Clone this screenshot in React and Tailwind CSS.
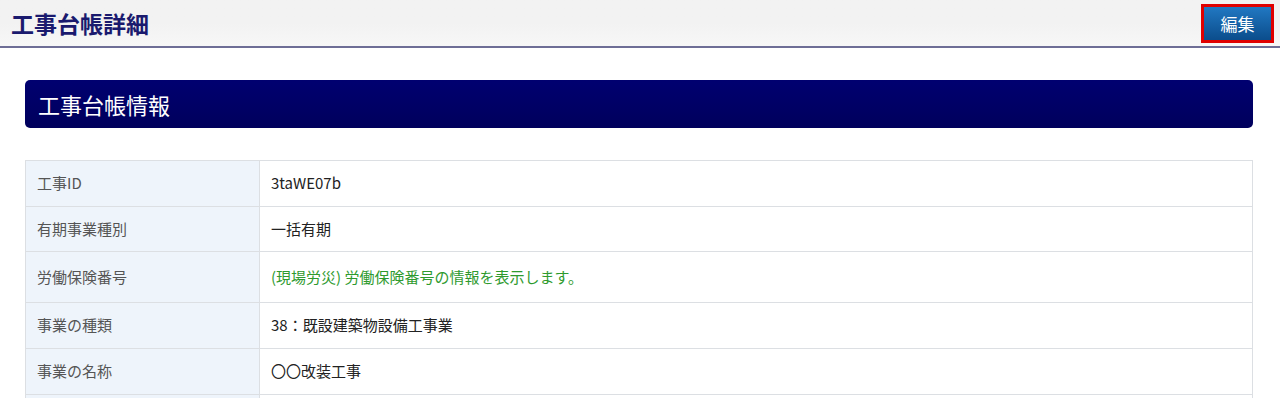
export default function App() {
    const rows = [
        { label: "工事ID", value: "3taWE07b", h: "h-[46px]" },
        { label: "有期事業種別", value: "一括有期", h: "h-[45px]" },
        { label: "労働保険番号", value: "(現場労災) 労働保険番号の情報を表示します。", h: "h-[51px]", green: true },
        { label: "事業の種類", value: "38：既設建築物設備工事業", h: "h-[46px]" },
        { label: "事業の名称", value: "〇〇改装工事", h: "h-[46px]" },
        { label: "", value: "", h: "h-[46px]" },
    ];

    return (
        <div className="w-[1280px] h-[398px] overflow-hidden bg-white font-['Noto_Sans_CJK_JP','Noto_Sans',sans-serif]">
            <div className="h-[48px] bg-gradient-to-b from-[#f2f2f2] via-[#f2f2f2] to-[#f7f7f7] border-b-2 border-[#6e6e96] flex items-center justify-between pl-[11px] pr-[6px]">
                <h1 className="text-[23px] font-bold text-[#1a1a6e] leading-none">工事台帳詳細</h1>
                <div className="border-[3px] border-[#e00000]">
                    <button className="w-[67px] h-[33px] bg-gradient-to-b from-[#2178c2] to-[#0b4d8c] text-white text-[17px] leading-none">
                        編集
                    </button>
                </div>
            </div>

            <div className="pl-[25px] pr-[27px] pt-[32px]">
                <div className="h-[48px] rounded-[5px] bg-gradient-to-b from-[#000070] to-[#00005c] flex items-center px-[13px]">
                    <h2 className="text-[22px] text-white leading-none">工事台帳情報</h2>
                </div>

                <table className="mt-[32px] w-full border-collapse text-[15px]">
                    <tbody>
                        {rows.map((r, i) => (
                            <tr key={i} className={r.h}>
                                <td className="w-[234px] border border-[#dcdfe3] bg-[#eef4fb] px-[11px] text-[#555]">
                                    {r.label}
                                </td>
                                <td className={`border border-[#dcdfe3] px-[11px] ${r.green ? "text-[#2e9a2e]" : "text-[#222]"}`}>
                                    {r.value}
                                </td>
                            </tr>
                        ))}
                    </tbody>
                </table>
            </div>
        </div>
    );
}
